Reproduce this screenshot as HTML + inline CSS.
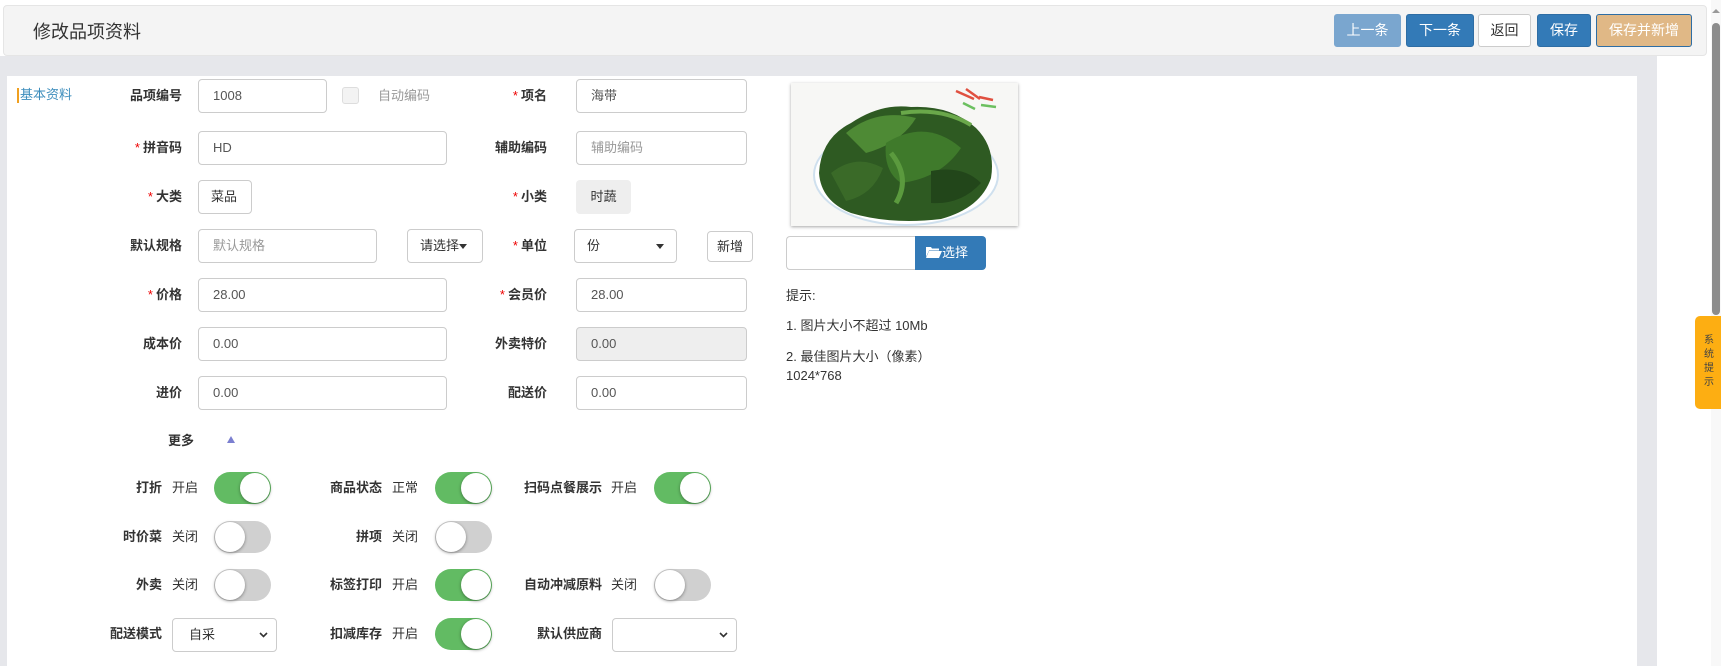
<!DOCTYPE html>
<html><head><meta charset="utf-8"><style>
*{box-sizing:border-box;margin:0;padding:0}
body{width:1721px;height:666px;overflow:hidden;background:#fff;font-family:"Liberation Sans","Noto Sans CJK SC",sans-serif;font-size:13px;color:#333;position:relative}
.a{position:absolute}
.hdr{left:3px;top:5px;width:1704px;height:51px;background:#f4f4f4;border:1px solid #e5e5e5;border-radius:4px}
.btn{position:absolute;top:14px;height:33px;line-height:31px;text-align:center;font-size:14px;color:#fff;border:1px solid #2e6da4;border-radius:3px;background:#337ab7}
.lbl{position:absolute;font-weight:bold;font-size:13px;text-align:right;line-height:34px;height:34px}
.lbl i{color:#e00;font-style:normal;font-weight:normal;margin-right:3px}
.inp{position:absolute;height:34px;border:1px solid #ccc;border-radius:4px;line-height:32px;padding-left:14px;font-size:13px;color:#555;background:#fff}
.ph{color:#999}
.tg{position:absolute;width:57px;height:32px;border-radius:16px;background:#62bb63}
.tg::after{content:"";position:absolute;top:1px;width:30px;height:30px;border-radius:50%;background:#fff;box-shadow:0 1px 3px rgba(0,0,0,.4)}
.tg.on::after{right:1px}
.tg.off{background:#d0d0d0}
.tg.off::after{left:1px}
.tl{position:absolute;font-weight:bold;text-align:right;line-height:32px}
.st{position:absolute;line-height:32px;color:#333}
.car{display:inline-block;border-left:4px solid transparent;border-right:4px solid transparent;border-top:5px solid #333;vertical-align:middle}
.chev{position:absolute;right:8px;top:13px}
</style></head><body>
<div class="a" style="left:0;top:56px;width:1711px;height:610px;background:#e6e7eb"></div>
<div class="a" style="left:7px;top:76px;width:1630px;height:590px;background:#fff"></div>
<div class="a" style="left:1657px;top:56px;width:54px;height:610px;background:#fff"></div>
<div class="a hdr"></div>
<div class="a" style="left:33px;top:19px;font-size:18px;color:#333;line-height:26px">修改品项资料</div>
<div class="btn" style="left:1334px;width:67px;background:#7aa6cf;border-color:#7aa6cf">上一条</div>
<div class="btn" style="left:1406px;width:68px">下一条</div>
<div class="btn" style="left:1478px;width:53px;background:#fff;color:#333;border-color:#ccc">返回</div>
<div class="btn" style="left:1537px;width:54px">保存</div>
<div class="btn" style="left:1596px;width:96px;background:#e0b886;border-color:#2e6da4">保存并新增</div>
<div class="a" style="left:1711px;top:0;width:10px;height:666px;background:#f8f8f8"></div>
<div class="a" style="left:1712px;top:23px;width:8px;height:292px;background:#8c8c8c;border-radius:4px"></div>
<div class="a" style="left:1712px;top:9px;border-left:4px solid transparent;border-right:4px solid transparent;border-bottom:4px solid #999"></div>
<div class="a" style="left:1695px;top:316px;width:26px;height:93px;background:#fdae12;border-radius:5px 0 0 5px;font-size:10px;color:#444;text-align:center;line-height:14px;padding-top:18px;padding-left:2px">系<br>统<br>提<br>示</div>
<div class="a" style="left:17px;top:88px;width:2px;height:15px;background:#f0a020"></div>
<div class="a" style="left:20px;top:86px;color:#3c8dbc;font-size:13px;line-height:18px">基本资料</div>
<div class="lbl" style="left:100px;top:79px;width:82px">品项编号</div>
<div class="inp" style="left:198px;top:79px;width:129px">1008</div>
<div class="a" style="left:342px;top:87px;width:17px;height:17px;border:1px solid #ddd;border-radius:3px;background:#f3f3f3"></div>
<div class="a" style="left:378px;top:87px;color:#999;line-height:18px">自动编码</div>
<div class="lbl" style="left:460px;top:79px;width:87px"><i>*</i>项名</div>
<div class="inp" style="left:576px;top:79px;width:171px">海带</div>
<div class="lbl" style="left:100px;top:131px;width:82px"><i>*</i>拼音码</div>
<div class="inp" style="left:198px;top:131px;width:249px">HD</div>
<div class="lbl" style="left:460px;top:131px;width:87px">辅助编码</div>
<div class="inp ph" style="left:576px;top:131px;width:171px">辅助编码</div>
<div class="lbl" style="left:100px;top:180px;width:82px"><i>*</i>大类</div>
<div class="inp" style="left:198px;top:180px;width:54px;padding-left:12px;color:#333">菜品</div>
<div class="lbl" style="left:460px;top:180px;width:87px"><i>*</i>小类</div>
<div class="a" style="left:576px;top:180px;width:55px;height:34px;background:#eee;border-radius:4px;line-height:34px;text-align:center">时蔬</div>
<div class="lbl" style="left:100px;top:229px;width:82px">默认规格</div>
<div class="inp ph" style="left:198px;top:229px;width:179px">默认规格</div>
<div class="inp" style="left:407px;top:229px;width:76px;padding-left:12px;color:#333">请选择<span class="car"></span></div>
<div class="lbl" style="left:460px;top:229px;width:87px"><i>*</i>单位</div>
<div class="inp" style="left:574px;top:229px;width:103px;padding-left:12px;color:#333">份<span class="car" style="position:absolute;right:12px;top:14px"></span></div>
<div class="inp" style="left:707px;top:231px;width:46px;height:31px;line-height:29px;padding-left:0;text-align:center;color:#333">新增</div>
<div class="lbl" style="left:100px;top:278px;width:82px"><i>*</i>价格</div>
<div class="inp" style="left:198px;top:278px;width:249px">28.00</div>
<div class="lbl" style="left:460px;top:278px;width:87px"><i>*</i>会员价</div>
<div class="inp" style="left:576px;top:278px;width:171px">28.00</div>
<div class="lbl" style="left:100px;top:327px;width:82px">成本价</div>
<div class="inp" style="left:198px;top:327px;width:249px">0.00</div>
<div class="lbl" style="left:460px;top:327px;width:87px">外卖特价</div>
<div class="inp" style="left:576px;top:327px;width:171px;background:#eee">0.00</div>
<div class="lbl" style="left:100px;top:376px;width:82px">进价</div>
<div class="inp" style="left:198px;top:376px;width:249px">0.00</div>
<div class="lbl" style="left:460px;top:376px;width:87px">配送价</div>
<div class="inp" style="left:576px;top:376px;width:171px">0.00</div>
<div class="a" style="left:168px;top:432px;font-weight:bold;line-height:18px">更多</div>
<div class="a" style="left:227px;top:436px;border-left:4px solid transparent;border-right:4px solid transparent;border-bottom:7px solid #7b7fd0"></div>
<div class="tl" style="left:100px;top:472px;width:62px">打折</div><div class="st" style="left:172px;top:472px">开启</div><div class="tg on" style="left:214px;top:472px"></div>
<div class="tl" style="left:300px;top:472px;width:82px">商品状态</div><div class="st" style="left:392px;top:472px">正常</div><div class="tg on" style="left:435px;top:472px"></div>
<div class="tl" style="left:500px;top:472px;width:102px">扫码点餐展示</div><div class="st" style="left:611px;top:472px">开启</div><div class="tg on" style="left:654px;top:472px"></div>
<div class="tl" style="left:100px;top:521px;width:62px">时价菜</div><div class="st" style="left:172px;top:521px">关闭</div><div class="tg off" style="left:214px;top:521px"></div>
<div class="tl" style="left:300px;top:521px;width:82px">拼项</div><div class="st" style="left:392px;top:521px">关闭</div><div class="tg off" style="left:435px;top:521px"></div>
<div class="tl" style="left:100px;top:569px;width:62px">外卖</div><div class="st" style="left:172px;top:569px">关闭</div><div class="tg off" style="left:214px;top:569px"></div>
<div class="tl" style="left:300px;top:569px;width:82px">标签打印</div><div class="st" style="left:392px;top:569px">开启</div><div class="tg on" style="left:435px;top:569px"></div>
<div class="tl" style="left:500px;top:569px;width:102px">自动冲减原料</div><div class="st" style="left:611px;top:569px">关闭</div><div class="tg off" style="left:654px;top:569px"></div>
<div class="tl" style="left:90px;top:618px;width:72px">配送模式</div>
<div class="inp" style="left:172px;top:618px;width:105px;padding-left:16px;color:#333">自采<svg class="chev" width="9" height="6" viewBox="0 0 9 6"><path d="M1 1l3.5 3.5L8 1" stroke="#333" stroke-width="1.6" fill="none"/></svg></div>
<div class="tl" style="left:300px;top:618px;width:82px">扣减库存</div><div class="st" style="left:392px;top:618px">开启</div><div class="tg on" style="left:435px;top:618px"></div>
<div class="tl" style="left:500px;top:618px;width:102px">默认供应商</div>
<div class="inp" style="left:612px;top:618px;width:125px"><svg class="chev" width="9" height="6" viewBox="0 0 9 6"><path d="M1 1l3.5 3.5L8 1" stroke="#333" stroke-width="1.6" fill="none"/></svg></div>
<div class="a" style="left:791px;top:83px;width:227px;height:143px;background:#fafafa;box-shadow:0 1px 3px rgba(0,0,0,.35);overflow:hidden">
<svg width="227" height="143" viewBox="0 0 227 143">
<rect width="227" height="143" fill="#f7f7f5"/>
<path d="M165 8 l18 8 M175 6 l14 10 M188 14 l14 3" stroke="#e05040" stroke-width="2.5"/>
<path d="M190 22 l15 2 M172 20 l12 6" stroke="#6cc060" stroke-width="2.5"/>
<ellipse cx="115" cy="92" rx="92" ry="50" fill="#fff" stroke="#cfe0ee" stroke-width="2"/>
<path d="M28 90 Q30 55 60 40 Q90 20 120 24 Q160 22 185 45 Q205 65 200 95 Q190 125 150 136 Q100 142 60 130 Q30 118 28 90 Z" fill="#2e5a22"/>
<path d="M55 50 Q85 25 125 35 Q110 60 75 70 Z" fill="#4e8a35"/>
<path d="M95 60 Q135 35 170 65 Q150 95 110 100 Q92 88 95 60Z" fill="#3f7a2b"/>
<path d="M40 90 Q65 70 92 85 Q82 112 55 118Z" fill="#3a6a28"/>
<path d="M140 88 Q172 82 190 100 Q170 122 140 120Z" fill="#22461a"/>
<path d="M110 30 Q150 24 180 42" stroke="#6aa84a" stroke-width="4" fill="none"/>
<path d="M100 70 Q120 95 105 120" stroke="#5b9a3e" stroke-width="5" fill="none"/>
</svg></div>
<div class="a" style="left:786px;top:236px;width:130px;height:34px;border:1px solid #ccc;border-right:0;border-radius:4px 0 0 4px"></div>
<div class="a" style="left:915px;top:236px;width:71px;height:34px;background:#337ab7;border-radius:0 4px 4px 0;color:#fff;line-height:34px;font-size:13px;padding-left:11px">
<svg width="16" height="12" viewBox="0 0 16 12" style="vertical-align:-1px"><path d="M0 1h5l1 1.5h7v2H3L0 11z M3 5h13l-3 7H0z" fill="#fff"/></svg>选择</div>
<div class="a" style="left:786px;top:287px;line-height:18px">提示:</div>
<div class="a" style="left:786px;top:317px;line-height:18px">1. 图片大小不超过 10Mb</div>
<div class="a" style="left:786px;top:347px;line-height:19px">2. 最佳图片大小（像素）<br>1024*768</div>
</body></html>
